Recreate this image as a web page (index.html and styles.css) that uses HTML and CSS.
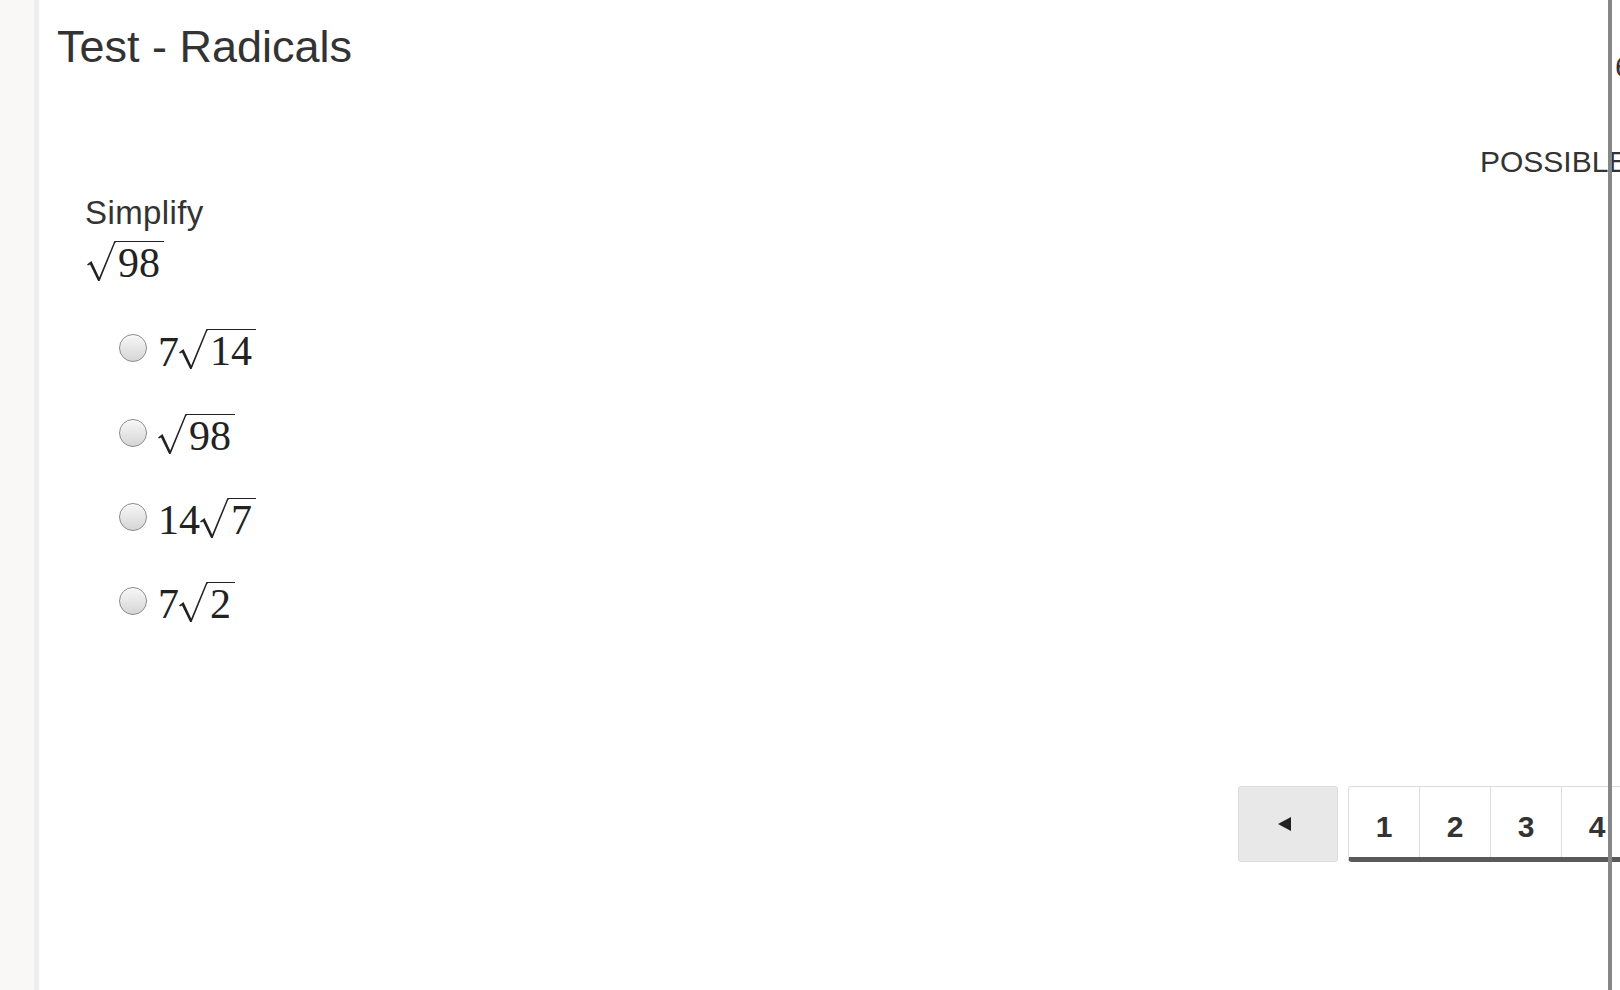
FILE: index.html
```html
<!DOCTYPE html>
<html lang="en">
<head>
<meta charset="utf-8">
<title>Test - Radicals</title>
<link rel="stylesheet" href="styles.css">
</head>
<body>
<div class="sidebar"></div>
<main class="main">
  <div class="top">
    <h1 class="title">Test - Radicals</h1>
    <div class="meta">
      <div class="progress">6 of 9</div>
      <div class="points">POSSIBLE POINTS: 11.11</div>
    </div>
  </div>

  <section class="question">
    <p class="prompt">Simplify</p>
    <div class="math prompt-math">
      <span class="sqrt"><svg class="surd" width="29" height="40" viewBox="0 0 29 40"><path d="M0,23.6 L4.5,20 L12.2,36.6 L27.4,0 L29,0 L29,1.5 L28.3,1.5 L12.6,40 L11.1,40 L3,23.4 L1,24.6 Z"/></svg><span class="rad">98</span></span>
    </div>

    <ul class="options">
      <li class="option">
        <span class="radio"></span>
        <span class="math"><span class="num">7</span><span class="sqrt"><svg class="surd" width="29" height="40" viewBox="0 0 29 40"><path d="M0,23.6 L4.5,20 L12.2,36.6 L27.4,0 L29,0 L29,1.5 L28.3,1.5 L12.6,40 L11.1,40 L3,23.4 L1,24.6 Z"/></svg><span class="rad">14</span></span></span>
      </li>
      <li class="option">
        <span class="radio"></span>
        <span class="math"><span class="sqrt"><svg class="surd" width="29" height="40" viewBox="0 0 29 40"><path d="M0,23.6 L4.5,20 L12.2,36.6 L27.4,0 L29,0 L29,1.5 L28.3,1.5 L12.6,40 L11.1,40 L3,23.4 L1,24.6 Z"/></svg><span class="rad">98</span></span></span>
      </li>
      <li class="option">
        <span class="radio"></span>
        <span class="math"><span class="num">14</span><span class="sqrt"><svg class="surd" width="29" height="40" viewBox="0 0 29 40"><path d="M0,23.6 L4.5,20 L12.2,36.6 L27.4,0 L29,0 L29,1.5 L28.3,1.5 L12.6,40 L11.1,40 L3,23.4 L1,24.6 Z"/></svg><span class="rad">7</span></span></span>
      </li>
      <li class="option">
        <span class="radio"></span>
        <span class="math"><span class="num">7</span><span class="sqrt"><svg class="surd" width="29" height="40" viewBox="0 0 29 40"><path d="M0,23.6 L4.5,20 L12.2,36.6 L27.4,0 L29,0 L29,1.5 L28.3,1.5 L12.6,40 L11.1,40 L3,23.4 L1,24.6 Z"/></svg><span class="rad">2</span></span></span>
      </li>
    </ul>
  </section>

  <nav class="pager">
    <button class="prev" type="button" aria-label="Previous"><svg width="14" height="14" viewBox="0 0 14 14"><polygon points="0,7 13,0 13,14"/></svg></button>
    <div class="pages">
      <span class="page">1</span>
      <span class="page">2</span>
      <span class="page">3</span>
      <span class="page">4</span>
      <span class="page">5</span>
      <span class="page">6</span>
    </div>
  </nav>
</main>
<div class="edge"></div>
</body>
</html>
```

FILE: styles.css
```css
html, body {
  margin: 0;
  padding: 0;
  height: 990px;
  overflow: hidden;
  background: #ffffff;
}

body {
  display: flex;
  font-family: "Liberation Sans", Arial, sans-serif;
  color: #333333;
}

.sidebar {
  flex: none;
  width: 34px;
  background: #f9f8f6;
  border-right: 5px solid #eeeeee;
}

.main {
  flex: 1;
  min-width: 0;
  padding-left: 18px;
}

.top {
  display: flex;
}

.title {
  flex: none;
  width: 1423px;
  margin: 21px 0 0;
  font-size: 45px;
  font-weight: normal;
  line-height: 52.8px;
  color: #333333;
}

.meta {
  flex: none;
  white-space: nowrap;
  font-size: 30px;
  line-height: 36px;
  color: #333333;
}

.progress {
  margin-top: 48.6px;
  padding-left: 135px;
}

.points {
  margin-top: 59px;
}

.question {
  margin-left: 28px;
}

.prompt {
  margin: 14px 0 0;
  font-size: 33px;
  letter-spacing: 0.4px;
  line-height: 37px;
}

.math {
  display: flex;
  align-items: flex-start;
  font-family: "Liberation Serif", "Times New Roman", serif;
  font-size: 42px;
  color: #222222;
}

.prompt-math {
  margin-top: 10.4px;
  margin-left: 2px;
}

.num {
  line-height: 40px;
  padding-top: 2.5px;
}

.sqrt {
  display: flex;
  align-items: flex-start;
}

.surd {
  display: block;
  flex: none;
  fill: #222222;
}

.rad {
  line-height: 40px;
  border-top: 1.5px solid #222222;
  padding: 1px 4px 0 2px;
}

.options {
  list-style: none;
  margin: 46.5px 0 0;
  padding: 0 0 0 33px;
  display: flex;
  flex-direction: column;
  gap: 41.8px;
}

.option {
  display: flex;
  align-items: flex-start;
}

.radio {
  flex: none;
  box-sizing: border-box;
  width: 28px;
  height: 28px;
  margin-top: 5px;
  margin-left: 1px;
  margin-right: 11px;
  border-radius: 50%;
  border: 1px solid #8a8a8a;
  background: linear-gradient(#f7f7f7, #d6d6d6);
  box-shadow: inset 0 1px 1px rgba(255, 255, 255, 0.9);
}

.pager {
  display: flex;
  gap: 10px;
  margin: 162px 0 0 1181px;
}

.prev {
  flex: none;
  box-sizing: border-box;
  width: 100px;
  height: 76px;
  padding: 0 6px 0 0;
  background: #e8e8e8;
  border: 1px solid #dcdcdc;
  border-radius: 3px;
  display: flex;
  align-items: center;
  justify-content: center;
  fill: #222222;
}

.prev svg {
  display: block;
}

.pages {
  flex: none;
  display: flex;
  box-sizing: border-box;
  height: 76px;
  background: #ffffff;
  border: 1px solid #dddddd;
  border-bottom: 5px solid #5a5a5a;
  border-radius: 3px 3px 4px 4px;
}

.page {
  flex: none;
  box-sizing: border-box;
  width: 71px;
  display: flex;
  align-items: center;
  justify-content: center;
  padding-top: 10px;
  border-right: 1px solid #dddddd;
  font-size: 30px;
  font-weight: bold;
  color: #333333;
}

.edge {
  position: fixed;
  top: 0;
  bottom: 0;
  right: 8px;
  width: 4px;
  background: #878787;
}
```
